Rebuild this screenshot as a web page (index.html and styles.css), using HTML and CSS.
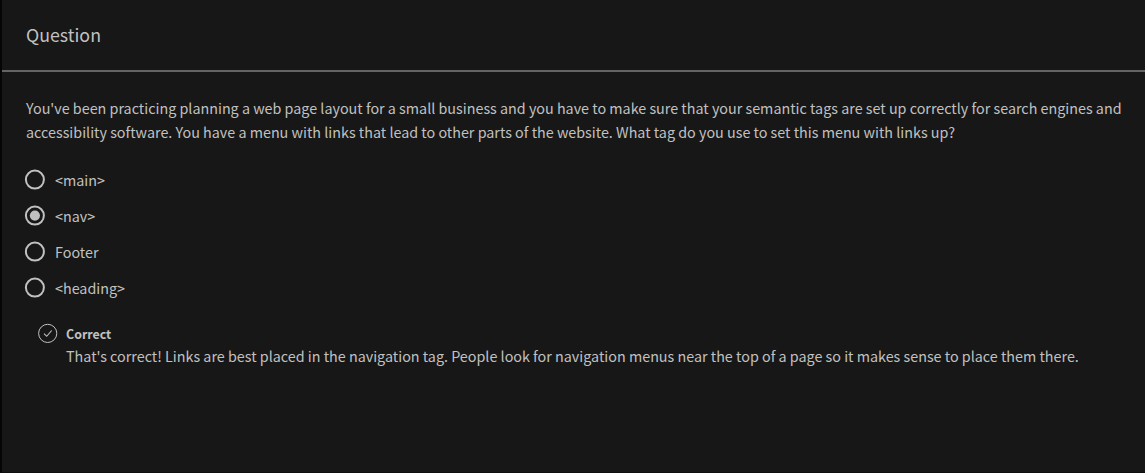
FILE: index.html
```html
<!DOCTYPE html>
<html lang="en">
<head>
<meta charset="utf-8">
<title>Question</title>
<link rel="stylesheet" href="styles.css">
</head>
<body>
<main class="card">
<header class="head"><h1 class="title">Question</h1></header>
<section class="body">
<p class="prompt"><span class="line">You've been practicing planning a web page layout for a small business and you have to make sure that your semantic tags are set up correctly for search engines and</span><span class="line">accessibility software. You have a menu with links that lead to other parts of the website. What tag do you use to set this menu with links up?</span></p>
<ul class="options">
<li class="option"><svg class="radio" viewBox="0 0 20 22"><circle class="ring" cx="9.9" cy="10.6" r="9"/></svg><span>&lt;main&gt;</span></li>
<li class="option"><svg class="radio" viewBox="0 0 20 22"><circle class="ring" cx="9.9" cy="10.6" r="9"/><circle class="dot" cx="9.9" cy="10.6" r="5.1"/></svg><span>&lt;nav&gt;</span></li>
<li class="option"><svg class="radio" viewBox="0 0 20 22"><circle class="ring" cx="9.9" cy="10.6" r="9"/></svg><span>Footer</span></li>
<li class="option"><svg class="radio" viewBox="0 0 20 22"><circle class="ring" cx="9.9" cy="10.6" r="9"/></svg><span>&lt;heading&gt;</span></li>
</ul>
<div class="feedback">
<svg class="check" viewBox="0 0 20 20" width="20" height="20" fill="none" stroke="currentColor"><circle cx="9.7" cy="10.4" r="9.1"/><path d="M6 10.6l2.7 2.7 5-5.8" stroke-width="1.1"/></svg>
<div><strong class="status">Correct</strong><p class="line">That's correct! Links are best placed in the navigation tag. People look for navigation menus near the top of a page so it makes sense to place them there.</p></div>
</div>
</section>
</main>
</body>
</html>
```
FILE: styles.css
```css
* { box-sizing: border-box; }
body { margin: 0; background: #171717; color: #c1c1c1; font: 14.33px/24px "Noto Sans CJK SC", "Noto Sans", sans-serif; }
p, ul, h1 { margin: 0; padding: 0; }
.card { height: 473px; border-left: 2px solid #050505; border-bottom: 1px solid #0e0e0e; }
.head { height: 72px; padding: 19px 24px; border-bottom: 2px solid #636564; }
.title { font-size: 17.8px; line-height: 30px; font-weight: 400; }
.body { padding: 24px 0 0 24px; }
.line { display: block; white-space: nowrap; }
.options { list-style: none; margin-top: 18px; }
.option { display: flex; align-items: center; height: 36px; gap: 10px; }
.radio { width: 20px; height: 22px; margin: 0 0 0 -1px; overflow: visible; }
.ring { fill: none; stroke: #c1c1c1; stroke-width: 2; }
.dot { fill: #c1c1c1; }
.feedback { display: flex; gap: 8px; margin: 17px 0 0 12px; }
.check { flex: none; }
.status { display: block; font-size: 12.4px; line-height: 20px; padding-top: 1px; }
```
